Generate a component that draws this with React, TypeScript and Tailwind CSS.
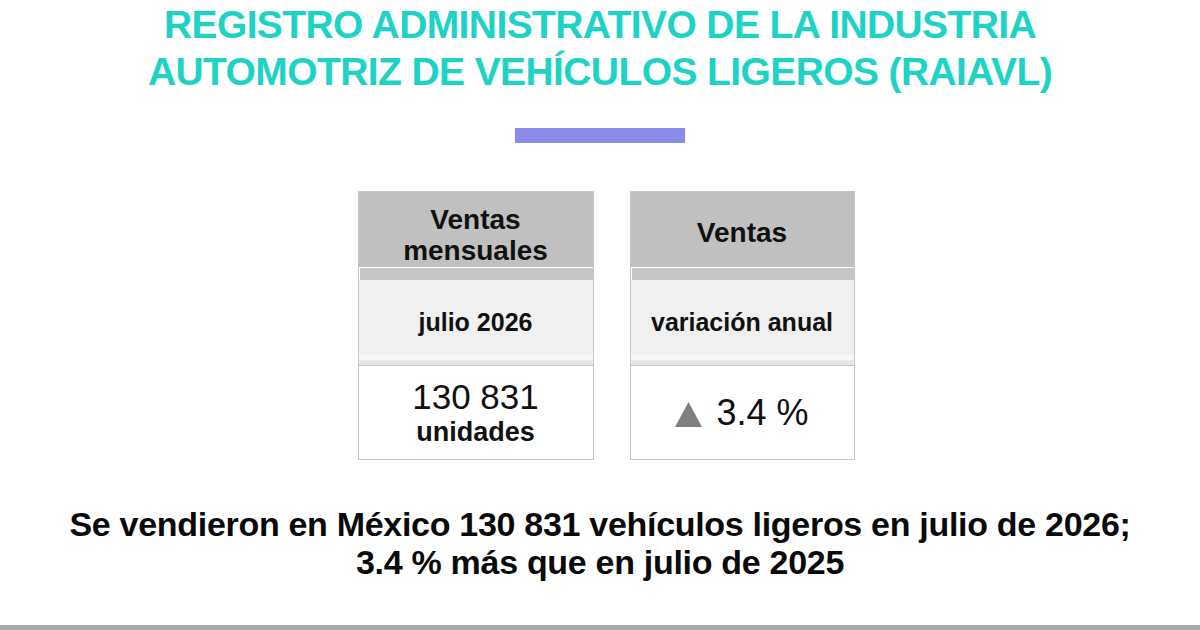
import React from 'react';

const font = { fontFamily: '"Liberation Sans", Arial, sans-serif' };

function StatCard({
  width,
  headerPad,
  header,
  sub,
  children,
}: {
  width: string;
  headerPad: string;
  header: React.ReactNode;
  sub: string;
  children: React.ReactNode;
}) {
  return (
    <div className={`${width} flex flex-col border border-[#c6c6c6] bg-white`}>
      <div
        className={`h-[75px] ${headerPad} bg-[#c0c0c0] flex items-center justify-center text-center text-[28px] leading-[31px] font-bold text-[#111]`}
      >
        {header}
      </div>
      <div className="h-px bg-white" />
      <div className="h-[12px] bg-[#c6c6c6] border-l border-white" />
      <div className="h-[75px] pt-[10px] bg-[#f0f0f0] flex items-center justify-center text-[25px] font-bold text-[#111]">
        {sub}
      </div>
      <div className="h-[5px] bg-[#f8f8f8]" />
      <div className="h-[6px] bg-[#e8e8e8] border-b border-[#c4c4c4]" />
      <div className="h-[93px] flex flex-col items-center justify-center text-[#111]">{children}</div>
    </div>
  );
}

export default function App() {
  return (
    <div className="w-[1200px] h-[630px] bg-white flex flex-col items-center overflow-hidden" style={font}>
      <h1 className="mt-px text-center text-[39px] leading-[47px] font-bold text-[#1ed3c6] tracking-[-0.6px]">
        <span className="block">REGISTRO ADMINISTRATIVO DE LA INDUSTRIA</span>
        <span className="block">AUTOMOTRIZ DE VEHÍCULOS LIGEROS (RAIAVL)</span>
      </h1>
      <div className="mt-[33px] w-[170px] h-[15px] bg-[#8a8ae8]" />
      <div className="mt-[48px] flex gap-[36px] pl-[12px]">
        <StatCard
          width="w-[236px]"
          headerPad="pt-[10px]"
          header={
            <span>
              Ventas
              <br />
              mensuales
            </span>
          }
          sub="julio 2026"
        >
          <span className="text-[35px] leading-[36px]">130 831</span>
          <span className="mt-[2px] text-[27px] leading-[30px] font-bold">unidades</span>
        </StatCard>
        <StatCard width="w-[225px]" headerPad="pt-[6px]" header="Ventas" sub="variación anual">
          <span className="flex items-center gap-[14px] text-[36px] leading-[40px]">
            <svg width="27" height="25" viewBox="0 0 27 25" className="mt-[4px]">
              <polygon points="13.5,0 27,25 0,25" fill="#808080" />
            </svg>
            3.4 %
          </span>
        </StatCard>
      </div>
      <p className="mt-[45px] text-center text-[34px] leading-[38px] font-bold text-[#0a0a0a] tracking-[-0.3px]">
        Se vendieron en México 130 831 vehículos ligeros en julio de 2026;
        <br />
        3.4 % más que en julio de 2025
      </p>
      <div className="mt-auto w-full h-[5px] bg-[#a9a9a9]" />
    </div>
  );
}
